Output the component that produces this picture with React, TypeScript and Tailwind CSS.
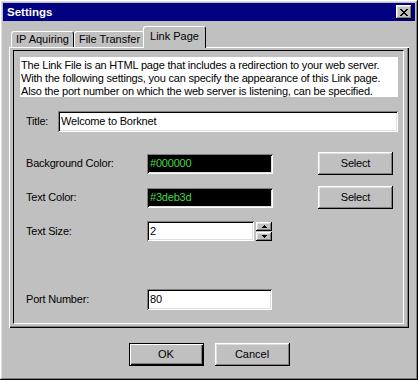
const raised =
  "shadow-[inset_-1px_-1px_#000,inset_1px_1px_#fff,inset_-2px_-2px_#808080,inset_2px_2px_#dfdfdf]";
const sunken =
  "shadow-[inset_1px_1px_#808080,inset_-1px_-1px_#fff,inset_2px_2px_#000,inset_-2px_-2px_#dfdfdf]";

function CloseGlyph() {
  return (
    <svg width="8" height="7" viewBox="0 0 8 7" shapeRendering="crispEdges">
      <path
        fill="#000"
        d="M0 0h2v1h-2zM6 0h2v1h-2zM1 1h2v1h-2zM5 1h2v1h-2zM2 2h4v1h-4zM3 3h2v1h-2zM2 4h4v1h-4zM1 5h2v1h-2zM5 5h2v1h-2zM0 6h2v1h-2zM6 6h2v1h-2z"
      />
    </svg>
  );
}

function Arrow({ up }: { up?: boolean }) {
  return (
    <svg width="5" height="3" viewBox="0 0 5 3" shapeRendering="crispEdges">
      <path fill="#000" d={up ? "M2 0h1v1h-1zM1 1h3v1h-3zM0 2h5v1h-5z" : "M0 0h5v1h-5zM1 1h3v1h-3zM2 2h1v1h-1z"} />
    </svg>
  );
}

function Button({ label, isDefault }: { label: string; isDefault?: boolean }) {
  return (
    <div
      className={
        isDefault
          ? "w-[75px] h-[23px] flex items-center justify-center border border-black shadow-[inset_1px_1px_#fff,inset_-1px_-1px_#000,inset_-2px_-2px_#808080]"
          : `w-[75px] h-[23px] flex items-center justify-center ${raised}`
      }
    >
      {label}
    </div>
  );
}

function Tab({ label, selected, width }: { label: string; selected?: boolean; width: string }) {
  return (
    <div
      className={
        selected
          ? `${width} h-[22px] -mb-[1px] -ml-[2px] relative z-10 bg-[#c0c0c0] border-t border-l border-white border-r border-r-black rounded-t-[3px] flex items-start justify-center pt-[3px]`
          : `${width} h-[16px] bg-[#c0c0c0] border-t border-l border-white border-r border-r-black rounded-t-[3px] flex items-start justify-center pt-[1px]`
      }
    >
      {label}
    </div>
  );
}

export default function App() {
  return (
    <div
      className={`w-[418px] h-[380px] bg-[#c0c0c0] p-[3px] flex flex-col text-[11px] text-black font-['Liberation_Sans',Arial,sans-serif] leading-[13px] ${raised}`}
    >
      <div className="h-[18px] bg-[#000080] flex items-center justify-between pl-[4px] pr-[3px]">
        <span className="text-white font-bold text-[11.5px]">Settings</span>
        <div className={`w-[16px] h-[14px] bg-[#c0c0c0] flex items-center justify-center ${raised}`}>
          <CloseGlyph />
        </div>
      </div>

      <div className="flex flex-col pl-[6px] pr-[6px] pt-[6px]">
        <div className="h-[20px] flex items-end pl-[2px]">
          <Tab label="IP Aquiring" width="w-[63px]" />
          <Tab label="File Transfer" width="w-[71px]" />
          <Tab label="Link Page" width="w-[63px]" selected />
        </div>

        <div className="h-[281px] pt-[3px] pl-[4px] pr-[5px] pb-[4px] shadow-[inset_1px_1px_#fff,inset_-1px_-1px_#000,inset_-2px_-2px_#808080]">
          <div className="h-full border-t border-l border-t-black border-l-black border-b border-r border-b-white border-r-white flex flex-col tracking-[-0.2px]">
            <div className="mt-[6px] ml-[6px] w-[378px] h-[40px] bg-white pl-[1px] pt-[2px]">
              <p>The Link File is an HTML page that includes a redirection to your web server.</p>
              <p>With the following settings, you can specify the appearance of this Link page.</p>
              <p>Also the port number on which the web server is listening, can be specified.</p>
            </div>

            <div className="mt-[14px] pl-[12px] flex items-center h-[21px]">
              <span className="w-[32px]">Title:</span>
              <div className={`w-[340px] h-[21px] bg-white flex items-center pl-[3px] ${sunken}`}>Welcome to Borknet</div>
            </div>

            <div className="mt-[20px] pl-[12px] flex items-center h-[23px]">
              <span className="w-[121px]">Background Color:</span>
              <div className={`w-[126px] h-[20px] bg-black text-[#45d945] flex items-center pl-[3px] ${sunken}`}>#000000</div>
              <div className="ml-[45px]">
                <Button label="Select" />
              </div>
            </div>

            <div className="mt-[11px] pl-[12px] flex items-center h-[23px]">
              <span className="w-[121px]">Text Color:</span>
              <div className={`w-[126px] h-[20px] bg-black text-[#45d945] flex items-center pl-[3px] ${sunken}`}>#3deb3d</div>
              <div className="ml-[45px]">
                <Button label="Select" />
              </div>
            </div>

            <div className="mt-[12px] pl-[12px] flex items-center h-[20px]">
              <span className="w-[121px]">Text Size:</span>
              <div className={`w-[107px] h-[20px] bg-white flex items-center pl-[3px] ${sunken}`}>2</div>
              <div className="ml-[2px] flex flex-col gap-[1px]">
                <div className={`w-[16px] h-[9px] flex items-center justify-center ${raised}`}>
                  <Arrow up />
                </div>
                <div className={`w-[16px] h-[9px] flex items-center justify-center ${raised}`}>
                  <Arrow />
                </div>
              </div>
            </div>

            <div className="mt-[48px] pl-[12px] flex items-center h-[21px]">
              <span className="w-[121px]">Port Number:</span>
              <div className={`w-[125px] h-[21px] bg-white flex items-center pl-[3px] ${sunken}`}>80</div>
            </div>
          </div>
        </div>

        <div className="mt-[15px] flex justify-center gap-[11px]">
          <Button label="OK" isDefault />
          <Button label="Cancel" />
        </div>
      </div>
    </div>
  );
}
